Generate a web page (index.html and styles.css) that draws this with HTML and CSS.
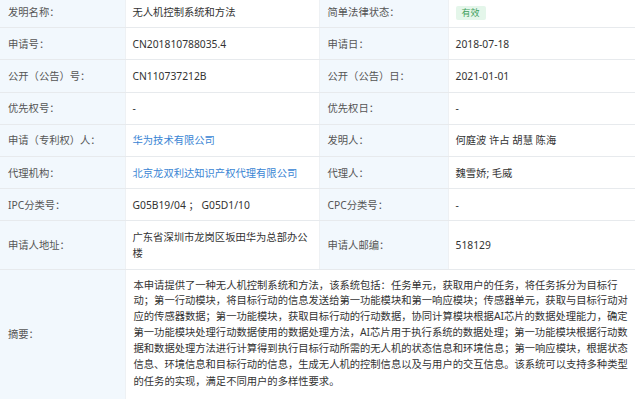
FILE: index.html
```html
<!DOCTYPE html>
<html lang="zh-CN">
<head>
<meta charset="utf-8">
<title>专利信息</title>
<link rel="stylesheet" href="styles.css">
</head>
<body>
<table class="info">
  <colgroup>
    <col class="c-label1">
    <col class="c-val1">
    <col class="c-label2">
    <col class="c-val2">
  </colgroup>
  <tbody>
    <tr>
      <td class="label">发明名称：</td>
      <td class="value">无人机控制系统和方法</td>
      <td class="label">简单法律状态：</td>
      <td class="value"><span class="badge">有效</span></td>
    </tr>
    <tr>
      <td class="label">申请号：</td>
      <td class="value">CN201810788035.4</td>
      <td class="label">申请日：</td>
      <td class="value">2018-07-18</td>
    </tr>
    <tr>
      <td class="label">公开（公告）号：</td>
      <td class="value">CN110737212B</td>
      <td class="label">公开（公告）日：</td>
      <td class="value">2021-01-01</td>
    </tr>
    <tr>
      <td class="label">优先权号：</td>
      <td class="value">-</td>
      <td class="label">优先权日：</td>
      <td class="value">-</td>
    </tr>
    <tr>
      <td class="label">申请（专利权）人：</td>
      <td class="value"><a class="link" href="#">华为技术有限公司</a></td>
      <td class="label">发明人：</td>
      <td class="value">何庭波 许占 胡慧 陈海</td>
    </tr>
    <tr>
      <td class="label">代理机构：</td>
      <td class="value"><a class="link" href="#">北京龙双利达知识产权代理有限公司</a></td>
      <td class="label">代理人：</td>
      <td class="value">魏雪娇; 毛威</td>
    </tr>
    <tr>
      <td class="label">IPC分类号：</td>
      <td class="value">G05B19/04 ； G05D1/10</td>
      <td class="label">CPC分类号：</td>
      <td class="value">-</td>
    </tr>
    <tr>
      <td class="label">申请人地址：</td>
      <td class="value">广东省深圳市龙岗区坂田华为总部办公<br>楼</td>
      <td class="label">申请人邮编：</td>
      <td class="value">518129</td>
    </tr>
    <tr class="abstract-row">
      <td class="label abstract-label">摘要：</td>
      <td class="value abstract" colspan="3">本申请提供了一种无人机控制系统和方法，该系统包括：任务单元，获取用户的任务，将任务拆分为目标行<br>动；第一行动模块，将目标行动的信息发送给第一功能模块和第一响应模块；传感器单元，获取与目标行动对<br>应的传感器数据；第一功能模块，获取目标行动的行动数据，协同计算模块根据AI芯片的数据处理能力，确定<br>第一功能模块处理行动数据使用的数据处理方法，AI芯片用于执行系统的数据处理；第一功能模块根据行动数<br>据和数据处理方法进行计算得到执行目标行动所需的无人机的状态信息和环境信息；第一响应模块，根据状态<br>信息<span class="sc">、</span>环境信息和目标行动的信息，生成无人机的控制信息以及与用户的交互信息<span class="sc">。</span>该系统可以支持多种类型<br>的任务的实现，满足不同用户的多样性要求<span class="sc">。</span></td>
    </tr>
  </tbody>
</table>
</body>
</html>
```
FILE: styles.css
```css
html, body {
  margin: 0;
  padding: 0;
  background: #ffffff;
}

body {
  font-family: "Noto Sans", "Noto Sans CJK TC", "Noto Sans CJK SC", sans-serif;
  font-size: 10.3px;
  color: #333333;
  overflow: hidden;
}

.sc {
  font-family: "Noto Sans CJK SC", sans-serif;
}

.info {
  width: 635px;
  margin-top: -4px;
  border-collapse: collapse;
  table-layout: fixed;
}

.c-label1 { width: 125px; }
.c-val1 { width: 194px; }
.c-label2 { width: 129px; }
.c-val2 { width: 187px; }

.info td {
  padding: 7.6px 8px;
  line-height: 16px;
  vertical-align: middle;
  border-bottom: 1px solid #e7eaed;
  border-right: 1px solid #eef1f4;
  white-space: nowrap;
}

.info td:last-child {
  border-right: none;
}

.label {
  background: #f2f8fd;
  color: #555555;
  padding-left: 5px;
}

.label + .value {
  padding-left: 7px;
}

.info td.label:nth-child(3) {
  padding-left: 8px;
}

.value {
  background: #ffffff;
  color: #333333;
}

.link {
  color: #3a85d4;
  text-decoration: none;
}

.badge {
  display: inline-block;
  padding: 0 6px;
  font-size: 9px;
  line-height: 14px;
  color: #3f9f5d;
  background: #e4f6ea;
  border-radius: 2px;
}

.abstract-row td {
  border-bottom: none;
}

.abstract-label {
  padding-bottom: 20px;
}

.info td.abstract {
  padding: 8px 0 9px 8px;
  line-height: 15.8px;
}
```
